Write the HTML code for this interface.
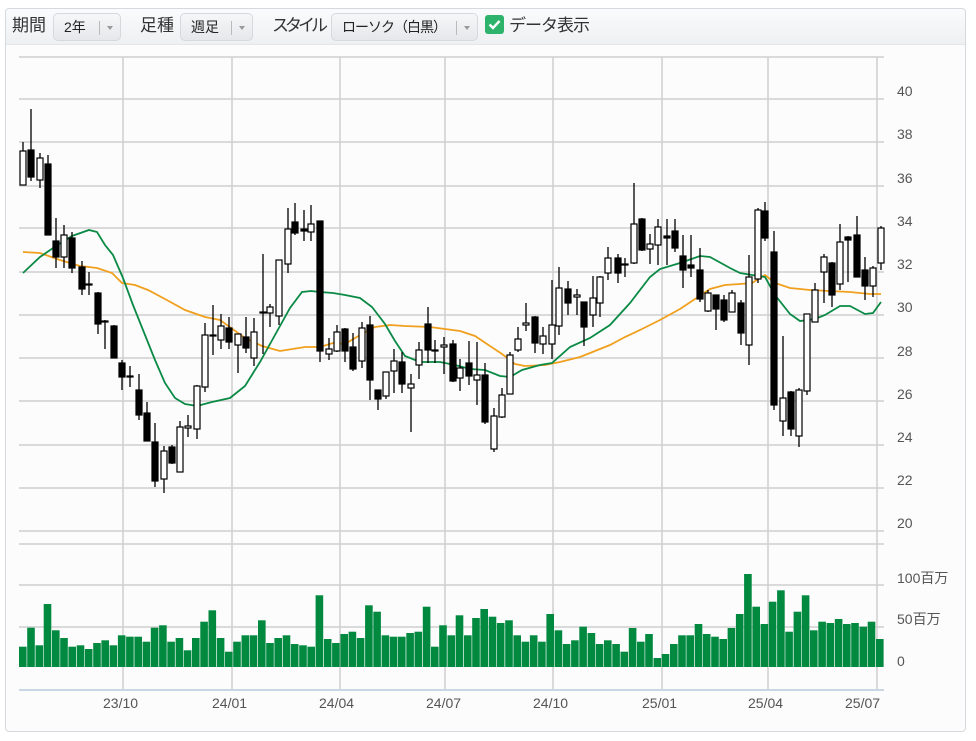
<!DOCTYPE html>
<html><head><meta charset="utf-8"><style>
*{margin:0;padding:0;box-sizing:border-box}
body{width:976px;height:741px;background:#fff;font-family:"Liberation Sans","Noto Sans CJK JP",sans-serif;position:relative;overflow:hidden}
.panel{position:absolute;left:5px;top:8px;width:961px;height:724px;border:1px solid #d5d9de;border-radius:4px;background:#fcfcfc}
.tb{position:absolute;left:0;top:0;width:100%;height:36px;background:linear-gradient(#fafbfc,#eef0f2);border-bottom:1px solid #e4e6e8;border-radius:4px 4px 0 0}
.lbl{position:absolute;top:5px;font-size:17px;line-height:24px;color:#333}
.dd{position:absolute;top:4px;height:28px;border:1px solid #d6d8db;border-radius:5px;background:linear-gradient(#f6f7f8,#e5e7ea);font-size:14px;line-height:18px;color:#222;padding:4px 0 0 10px}
.dd .s{position:absolute;right:20px;top:7px;width:1px;height:14px;background:#bbb}
.dd .a{position:absolute;right:7px;top:12px;border-left:3px solid transparent;border-right:3px solid transparent;border-top:4px solid #999}
.cb{position:absolute;left:479px;top:6px;width:19px;height:19px;background:#2db36b;border-radius:3px}
svg{position:absolute;left:0;top:0}
</style></head><body>
<div class="panel"><div class="tb">
<div class="lbl" style="left:6px">期間</div>
<div class="dd" style="left:47px;width:68px">2年<div class="s"></div><div class="a"></div></div>
<div class="lbl" style="left:134px">足種</div>
<div class="dd" style="left:174px;width:73px">週足<div class="s"></div><div class="a"></div></div>
<div class="lbl" style="left:266px;letter-spacing:-4px">スタイル</div>
<div class="dd" style="left:325px;width:147px;letter-spacing:-1px">ローソク（白黒）<div class="s"></div><div class="a"></div></div>
<div class="cb"><svg width="19" height="19" viewBox="0 0 19 19"><path d="M4.5 9.5l3.5 3.5 6.5-7" stroke="#fff" stroke-width="2.4" fill="none"/></svg></div>
<div class="lbl" style="left:503px;letter-spacing:-1px">データ表示</div>
</div></div>
<svg width="976" height="741" viewBox="0 0 976 741">
<g stroke="#cfcfcf" stroke-width="1.5">
<line x1="19" y1="57" x2="884" y2="57"/>
<line x1="19" y1="99" x2="884" y2="99"/><line x1="19" y1="142" x2="884" y2="142"/><line x1="19" y1="186" x2="884" y2="186"/><line x1="19" y1="228" x2="884" y2="228"/><line x1="19" y1="272" x2="884" y2="272"/><line x1="19" y1="315" x2="884" y2="315"/><line x1="19" y1="358" x2="884" y2="358"/><line x1="19" y1="401" x2="884" y2="401"/><line x1="19" y1="445" x2="884" y2="445"/><line x1="19" y1="488" x2="884" y2="488"/><line x1="19" y1="531" x2="884" y2="531"/>
<line x1="19" y1="544" x2="884" y2="544"/><line x1="19" y1="585" x2="884" y2="585"/><line x1="19" y1="627" x2="884" y2="627"/>
<line x1="123" y1="57" x2="123" y2="690"/><line x1="232" y1="57" x2="232" y2="690"/><line x1="340" y1="57" x2="340" y2="690"/><line x1="445" y1="57" x2="445" y2="690"/><line x1="553" y1="57" x2="553" y2="690"/><line x1="662" y1="57" x2="662" y2="690"/><line x1="768" y1="57" x2="768" y2="690"/><line x1="877" y1="57" x2="877" y2="690"/>
</g>
<line x1="19" y1="690" x2="884" y2="690" stroke="#c9d6e3" stroke-width="2"/>
<g font-family="Liberation Sans,Noto Sans CJK JP,sans-serif" font-size="14" fill="#555">
<text x="897" y="96">40</text><text x="897" y="139">38</text><text x="897" y="183">36</text><text x="897" y="226">34</text><text x="897" y="269">32</text><text x="897" y="312">30</text><text x="897" y="356">28</text><text x="897" y="399">26</text><text x="897" y="442">24</text><text x="897" y="485">22</text><text x="897" y="528">20</text>
<text x="897" y="583">100百万</text><text x="897" y="624">50百万</text><text x="897" y="666">0</text>
<text x="103" y="708">23/10</text><text x="212" y="708">24/01</text><text x="319" y="708">24/04</text><text x="426" y="708">24/07</text><text x="533" y="708">24/10</text><text x="642" y="708">25/01</text><text x="748" y="708">25/04</text><text x="845" y="708">25/07</text>
</g>
<g fill="#00893f">
<rect x="19.0" y="646.7" width="7.6" height="20.3"/><rect x="27.2" y="627.7" width="7.6" height="39.3"/><rect x="35.5" y="645.3" width="7.6" height="21.7"/><rect x="43.7" y="604" width="7.6" height="63"/><rect x="52.0" y="630.3" width="7.6" height="36.7"/><rect x="60.2" y="638" width="7.6" height="29"/><rect x="68.4" y="646.7" width="7.6" height="20.3"/><rect x="76.7" y="645.3" width="7.6" height="21.7"/><rect x="84.9" y="649" width="7.6" height="18"/><rect x="93.2" y="643" width="7.6" height="24"/>
<rect x="101.4" y="640.3" width="7.6" height="26.7"/><rect x="109.6" y="645.3" width="7.6" height="21.7"/><rect x="117.9" y="635.3" width="7.6" height="31.7"/><rect x="126.1" y="636.7" width="7.6" height="30.3"/><rect x="134.4" y="636.7" width="7.6" height="30.3"/><rect x="142.6" y="641.7" width="7.6" height="25.3"/><rect x="150.8" y="627.7" width="7.6" height="39.3"/><rect x="159.1" y="625.3" width="7.6" height="41.7"/><rect x="167.3" y="641.7" width="7.6" height="25.3"/><rect x="175.6" y="638" width="7.6" height="29"/>
<rect x="183.8" y="650.3" width="7.6" height="16.7"/><rect x="192.0" y="638" width="7.6" height="29"/><rect x="200.3" y="621.7" width="7.6" height="45.3"/><rect x="208.5" y="610.3" width="7.6" height="56.7"/><rect x="216.8" y="638" width="7.6" height="29"/><rect x="225.0" y="651.7" width="7.6" height="15.3"/><rect x="233.2" y="641.7" width="7.6" height="25.3"/><rect x="241.5" y="635.3" width="7.6" height="31.7"/><rect x="249.7" y="635.3" width="7.6" height="31.7"/><rect x="258.0" y="620.3" width="7.6" height="46.7"/>
<rect x="266.2" y="643" width="7.6" height="24"/><rect x="274.4" y="638" width="7.6" height="29"/><rect x="282.7" y="635.3" width="7.6" height="31.7"/><rect x="290.9" y="644" width="7.6" height="23"/><rect x="299.2" y="645.3" width="7.6" height="21.7"/><rect x="307.4" y="646.7" width="7.6" height="20.3"/><rect x="315.6" y="595.3" width="7.6" height="71.7"/><rect x="323.9" y="639" width="7.6" height="28"/><rect x="332.1" y="643" width="7.6" height="24"/><rect x="340.4" y="634" width="7.6" height="33"/>
<rect x="348.6" y="631.7" width="7.6" height="35.3"/><rect x="356.8" y="638" width="7.6" height="29"/><rect x="365.1" y="605.3" width="7.6" height="61.7"/><rect x="373.3" y="611.7" width="7.6" height="55.3"/><rect x="381.6" y="635.3" width="7.6" height="31.7"/><rect x="389.8" y="636.7" width="7.6" height="30.3"/><rect x="398.0" y="636.7" width="7.6" height="30.3"/><rect x="406.3" y="633" width="7.6" height="34"/><rect x="414.5" y="631.7" width="7.6" height="35.3"/><rect x="422.8" y="606.7" width="7.6" height="60.3"/>
<rect x="431.0" y="646.7" width="7.6" height="20.3"/><rect x="439.2" y="625.3" width="7.6" height="41.7"/><rect x="447.5" y="635.3" width="7.6" height="31.7"/><rect x="455.7" y="615.3" width="7.6" height="51.7"/><rect x="464.0" y="635.3" width="7.6" height="31.7"/><rect x="472.2" y="618" width="7.6" height="49"/><rect x="480.4" y="609" width="7.6" height="58"/><rect x="488.7" y="616.7" width="7.6" height="50.3"/><rect x="496.9" y="623" width="7.6" height="44"/><rect x="505.2" y="620.3" width="7.6" height="46.7"/>
<rect x="513.4" y="635.3" width="7.6" height="31.7"/><rect x="521.6" y="641.7" width="7.6" height="25.3"/><rect x="529.9" y="635.3" width="7.6" height="31.7"/><rect x="538.1" y="641.7" width="7.6" height="25.3"/><rect x="546.4" y="614" width="7.6" height="53"/><rect x="554.6" y="630.3" width="7.6" height="36.7"/><rect x="562.8" y="644" width="7.6" height="23"/><rect x="571.1" y="640.3" width="7.6" height="26.7"/><rect x="579.3" y="626.7" width="7.6" height="40.3"/><rect x="587.6" y="633" width="7.6" height="34"/>
<rect x="595.8" y="644" width="7.6" height="23"/><rect x="604.0" y="640.3" width="7.6" height="26.7"/><rect x="612.3" y="644" width="7.6" height="23"/><rect x="620.5" y="651.7" width="7.6" height="15.3"/><rect x="628.8" y="628" width="7.6" height="39"/><rect x="637.0" y="641.7" width="7.6" height="25.3"/><rect x="645.2" y="634" width="7.6" height="33"/><rect x="653.5" y="658" width="7.6" height="9"/><rect x="661.7" y="654" width="7.6" height="13"/><rect x="670.0" y="644" width="7.6" height="23"/>
<rect x="678.2" y="635.3" width="7.6" height="31.7"/><rect x="686.4" y="635.3" width="7.6" height="31.7"/><rect x="694.7" y="624" width="7.6" height="43"/><rect x="702.9" y="634" width="7.6" height="33"/><rect x="711.2" y="636.7" width="7.6" height="30.3"/><rect x="719.4" y="639" width="7.6" height="28"/><rect x="727.6" y="628" width="7.6" height="39"/><rect x="735.9" y="614" width="7.6" height="53"/><rect x="744.1" y="574" width="7.6" height="93"/><rect x="752.4" y="606.7" width="7.6" height="60.3"/>
<rect x="760.6" y="624" width="7.6" height="43"/><rect x="768.8" y="601.7" width="7.6" height="65.3"/><rect x="777.1" y="590.3" width="7.6" height="76.7"/><rect x="785.3" y="631.7" width="7.6" height="35.3"/><rect x="793.6" y="611.7" width="7.6" height="55.3"/><rect x="801.8" y="595.3" width="7.6" height="71.7"/><rect x="810.0" y="630.3" width="7.6" height="36.7"/><rect x="818.3" y="621.7" width="7.6" height="45.3"/><rect x="826.5" y="623" width="7.6" height="44"/><rect x="834.8" y="619" width="7.6" height="48"/>
<rect x="843.0" y="624" width="7.6" height="43"/><rect x="851.2" y="623" width="7.6" height="44"/><rect x="859.5" y="626.7" width="7.6" height="40.3"/><rect x="867.7" y="621.7" width="7.6" height="45.3"/><rect x="876.0" y="639" width="7.6" height="28"/>
</g>
<polyline fill="none" stroke="#f0a01e" stroke-width="1.8" points="23,252 40,253 60,260 80,266 97,268 112,273 122,283 135,285 148,290 165,299 185,310 205,317 220,320 245,338 262,346 280,351 305,347 320,347 333,343 345,344 360,335 375,327 390,325 405,326 430,327 460,331 475,336 490,346 502,354 515,364 525,366 545,365 560,362 580,357 595,351 610,345 625,337 640,330 660,320 680,309 695,299 710,289 725,285 740,284 752,283 765,275 775,283 790,288 810,290 830,291 850,292 870,294 881,294"/>
<polyline fill="none" stroke="#0a8a45" stroke-width="1.8" points="23,273 40,257 56,246 72,236 89,230 97,232 105,245 113,255 123,278 133,305 145,335 155,360 165,383 175,398 185,404 197,406 212,402 230,398 245,386 260,362 275,335 290,308 302,292 311,291 320,292 333,293 345,295 360,298 372,307 385,324 395,341 405,356 420,362 440,362 455,365 470,369 485,370 500,376 510,377 522,370 540,365 552,363 570,347 590,338 610,325 630,303 650,277 660,269 680,263 700,256 710,257 730,268 740,273 752,275 765,277 775,295 790,314 800,321 815,319 825,315 840,306 850,306 865,314 873,313 881,302"/>
<g stroke="#000" stroke-width="1.3">
<path d="M23 142V185M31 109V181M40 153V188M48 155V235M56 218V268M64 225V268M72 232V273M82 261V295M89 272V295M98 292V334M105 320V349M114 325V358M122 360V390M130 366V387M139 374V420M147 402V441M155 423V487M164 446V493M172 445V464M180 421V471M188 415V437M197 385V439M205 323V392M213 305V355M221 314V349M229 317V349M238 334V373M246 317V353M254 318V366M263 254V354M270 304V327M279 260V325M288 208V273M295 203V235M304 210V241M311 205V241M320 221V362M329 338V360M337 325V352M345 328V362M353 333V371M362 322V368M370 316V400M378 390V410M386 372V399M394 349V393M402 352V393M411 374V432M419 342V379M428 307V363M435 340V363M444 337V374M453 340V382M460 359V391M469 341V385M477 342V405M485 363V424M494 408V452M502 388V418M510 352V394M518 327V352M526 303V331M535 316V353M543 327V354M552 280V359M559 267V335M568 281V315M577 289V315M584 302V346M593 276V327M600 276V317M608 247V280M618 254V283M625 258V277M634 183V264M642 218V251M650 234V264M658 219V265M667 219V265M675 219V252M683 235V288M691 235V277M700 248V302M708 290V312M716 295V330M724 295V322M732 290V312M741 300V345M749 255V365M758 208V283M765 202V241M774 231V410M783 336V436M791 391V436M799 388V447M807 314V395M815 283V322M824 254V303M832 262V307M840 224V290M848 236V282M857 216V277M865 257V300M873 266V297M881 226V270"/>
</g>
<g stroke="#000" stroke-width="1.2" fill="#000">
<rect x="28" y="150" width="6" height="27"/><rect x="45" y="164" width="6" height="71"/><rect x="53" y="241" width="6" height="16"/><rect x="69" y="238" width="6" height="30"/><rect x="79" y="267" width="6" height="22"/><rect x="86" y="284" width="6" height="1"/><rect x="95" y="293" width="6" height="31"/><rect x="102" y="321" width="6" height="1"/><rect x="111" y="326" width="6" height="32"/><rect x="119" y="363" width="6" height="14"/><rect x="127" y="376" width="6" height="1"/><rect x="136" y="390" width="6" height="25"/><rect x="144" y="413" width="6" height="28"/><rect x="152" y="442" width="6" height="39"/><rect x="169" y="447" width="6" height="16"/><rect x="210" y="335" width="6" height="1"/><rect x="226" y="328" width="6" height="14"/><rect x="243" y="337" width="6" height="11"/><rect x="260" y="312" width="6" height="1"/><rect x="292" y="222" width="6" height="11"/><rect x="301" y="229" width="6" height="2"/>
<rect x="317" y="221" width="6" height="130"/><rect x="342" y="329" width="6" height="22"/><rect x="350" y="347" width="6" height="22"/><rect x="367" y="325" width="6" height="55"/><rect x="375" y="390" width="6" height="9"/><rect x="399" y="362" width="6" height="22"/><rect x="425" y="324" width="6" height="26"/><rect x="432" y="350" width="6" height="1"/><rect x="450" y="344" width="6" height="37"/><rect x="466" y="363" width="6" height="13"/><rect x="482" y="375" width="6" height="47"/><rect x="532" y="317" width="6" height="26"/><rect x="565" y="289" width="6" height="14"/><rect x="581" y="302" width="6" height="25"/>
<rect x="615" y="258" width="6" height="15"/><rect x="622" y="264" width="6" height="1"/><rect x="639" y="219" width="6" height="31"/><rect x="664" y="236" width="6" height="2"/><rect x="672" y="231" width="6" height="17"/><rect x="680" y="256" width="6" height="14"/><rect x="688" y="265" width="6" height="3"/><rect x="697" y="270" width="6" height="29"/><rect x="713" y="295" width="6" height="14"/><rect x="721" y="300" width="6" height="20"/><rect x="738" y="303" width="6" height="30"/><rect x="762" y="211" width="6" height="27"/><rect x="771" y="252" width="6" height="153"/><rect x="788" y="392" width="6" height="37"/><rect x="829" y="263" width="6" height="32"/><rect x="845" y="237" width="6" height="3"/><rect x="854" y="235" width="6" height="42"/><rect x="862" y="270" width="6" height="16"/>
</g>
<g stroke="#000" stroke-width="1.2" fill="#fff">
<rect x="20" y="151" width="6" height="34"/><rect x="37" y="158" width="6" height="22"/><rect x="61" y="235" width="6" height="22"/><rect x="161" y="451" width="6" height="28"/><rect x="177" y="427" width="6" height="45"/><rect x="185" y="426" width="6" height="2"/><rect x="194" y="386" width="6" height="43"/><rect x="202" y="335" width="6" height="52"/><rect x="218" y="326" width="6" height="14"/><rect x="235" y="334" width="6" height="11"/><rect x="251" y="332" width="6" height="26"/><rect x="267" y="307" width="6" height="6"/><rect x="276" y="260" width="6" height="56"/><rect x="285" y="229" width="6" height="35"/><rect x="308" y="224" width="6" height="8"/>
<rect x="326" y="349" width="6" height="5"/><rect x="334" y="332" width="6" height="19"/><rect x="359" y="328" width="6" height="33"/><rect x="383" y="372" width="6" height="24"/><rect x="391" y="361" width="6" height="10"/><rect x="408" y="384" width="6" height="4"/><rect x="416" y="350" width="6" height="15"/><rect x="441" y="345" width="6" height="2"/><rect x="457" y="368" width="6" height="10"/><rect x="474" y="375" width="6" height="5"/><rect x="491" y="416" width="6" height="33"/><rect x="499" y="395" width="6" height="22"/><rect x="507" y="355" width="6" height="39"/><rect x="515" y="339" width="6" height="11"/><rect x="523" y="323" width="6" height="2"/><rect x="540" y="336" width="6" height="8"/><rect x="549" y="325" width="6" height="19"/><rect x="556" y="288" width="6" height="38"/><rect x="574" y="295" width="6" height="2"/><rect x="590" y="298" width="6" height="17"/><rect x="597" y="277" width="6" height="26"/><rect x="605" y="258" width="6" height="15"/>
<rect x="631" y="224" width="6" height="39"/><rect x="647" y="244" width="6" height="5"/><rect x="655" y="227" width="6" height="18"/><rect x="705" y="293" width="6" height="18"/><rect x="729" y="293" width="6" height="19"/><rect x="746" y="277" width="6" height="68"/><rect x="755" y="210" width="6" height="69"/><rect x="780" y="398" width="6" height="23"/><rect x="796" y="390" width="6" height="46"/><rect x="804" y="314" width="6" height="77"/><rect x="812" y="290" width="6" height="32"/><rect x="821" y="257" width="6" height="15"/><rect x="837" y="242" width="6" height="42"/><rect x="870" y="268" width="6" height="18"/><rect x="878" y="228" width="6" height="35"/>
</g>
</svg>
</body></html>
